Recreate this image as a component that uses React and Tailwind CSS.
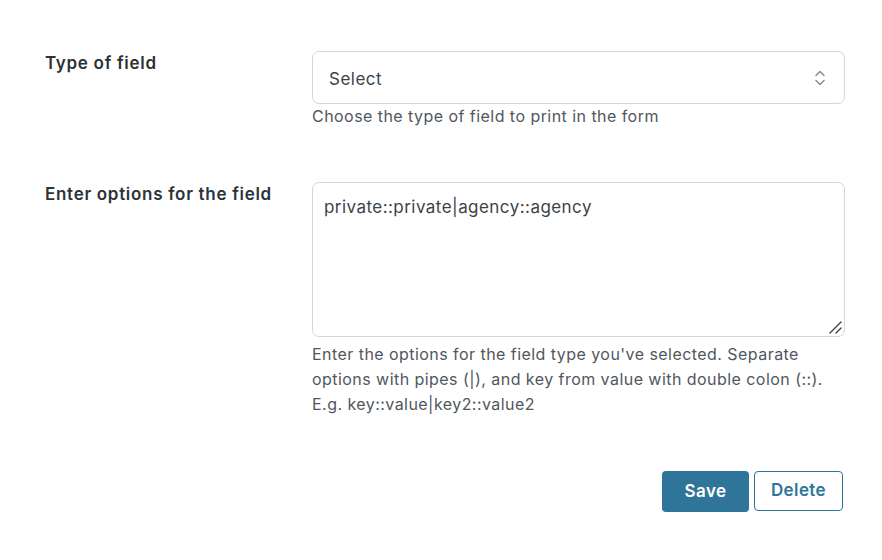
import { useState } from 'react';

const font = { fontFamily: 'Inter, "Noto Sans", sans-serif' };

const SelectArrows = () => (
  <svg width="12" height="18" viewBox="0 0 12 18" fill="none" stroke="#8c8f94" strokeWidth="1.6" strokeLinecap="round" strokeLinejoin="round">
    <path d="M2 6.5 6 2.5l4 4" />
    <path d="M2 11.5l4 4 4-4" />
  </svg>
);

const ResizeHandle = () => (
  <svg width="14" height="14" viewBox="0 0 14 14" stroke="#3c434a" strokeWidth="1.4" strokeLinecap="round">
    <path d="M2 13 13 2" />
    <path d="M8 13 13 8" />
  </svg>
);

const Row = ({ label, help, children }) => (
  <div className="grid grid-cols-[267px_533px]">
    <div className="text-[17px] leading-6 font-semibold tracking-[0.7px] text-[#2c3338]">{label}</div>
    <div>
      {children}
      <div className="text-[16px] leading-[25px] tracking-[0.45px] text-[#50575e]">{help}</div>
    </div>
  </div>
);

export default function App() {
  const [options, setOptions] = useState('private::private|agency::agency');

  return (
    <div className="w-[882px] h-[560px] bg-white pl-[45px] pt-[51px]" style={font}>
      <Row label="Type of field" help="Choose the type of field to print in the form">
        <div className="h-[53px] border border-[#d4d6d9] rounded-[7px] flex items-center justify-between pl-4 pr-[18px] text-[17px] text-[#3c434a]">
          <span className="pt-[4px] tracking-[0.5px]">Select</span>
          <SelectArrows />
        </div>
      </Row>

      <div className="mt-[53px]">
        <Row
          label="Enter options for the field"
          help={
            <div className="mt-[5px]">
              Enter the options for the field type you've selected. Separate
              <br />
              options with pipes (|), and key from value with double colon (::).
              <br />
              E.g. key::value|key2::value2
            </div>
          }
        >
          <div className="relative h-[155px] border border-[#d4d6d9] rounded-[7px]">
            <textarea
              value={options}
              onChange={(e) => setOptions(e.target.value)}
              className="w-full h-full resize-none outline-none bg-transparent px-[11px] pt-[12px] text-[17px] leading-6 tracking-[0.45px] text-[#3c434a]"
              style={font}
            />
            <div className="absolute right-[2px] bottom-[2px] pointer-events-none">
              <ResizeHandle />
            </div>
          </div>
        </Row>
      </div>

      <div className="w-[798px] flex justify-end gap-[5px] mt-[54px]">
        <button className="w-[87px] h-[41px] rounded-[4px] bg-[#2e7599] text-white text-[17px] font-semibold tracking-[0.4px]">
          Save
        </button>
        <button className="w-[89px] h-[40px] rounded-[4px] border border-[#2e7599] bg-white text-[#2e7599] text-[17px] font-semibold tracking-[0.4px]">
          Delete
        </button>
      </div>
    </div>
  );
}
